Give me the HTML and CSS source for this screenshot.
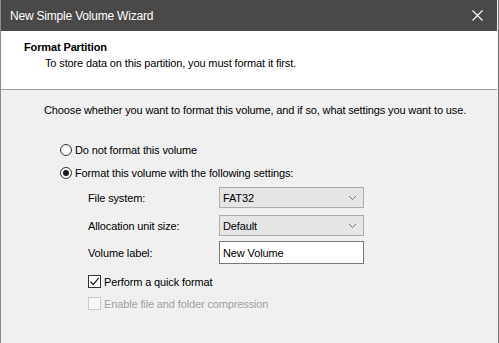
FILE: index.html
```html
<!DOCTYPE html>
<html lang="en">
<head>
    <meta charset="UTF-8">
    <title>New Simple Volume Wizard</title>
    <link rel="stylesheet" href="styles.css">
</head>
<body>

    <div class="window">

        <div class="titlebar">
            <span class="title">New Simple Volume Wizard</span>
            <svg class="close" width="11" height="11" viewBox="0 0 11 11">
                <path d="M0.5 0.5 L10.5 10.5 M10.5 0.5 L0.5 10.5" stroke="#ffffff" stroke-width="1.1" fill="none"/>
            </svg>
        </div>

        <div class="header">
            <div class="page-title">Format Partition</div>
            <div class="page-sub">To store data on this partition, you must format it first.</div>
        </div>

        <div class="content">
            <p class="intro">Choose whether you want to format this volume, and if so, what settings you want to use.</p>

            <label class="option first">
                <span class="radio"></span>
                <span>Do not format this volume</span>
            </label>
            <label class="option second">
                <span class="radio checked"></span>
                <span>Format this volume with the following settings:</span>
            </label>

            <div class="settings">
                <div class="field combo-row">
                    <span class="field-label">File system:</span>
                    <div class="combo">
                        <span>FAT32</span>
                        <svg width="9" height="6" viewBox="0 0 9 6"><path d="M1 1 L4.5 4.5 L8 1" stroke="#777" fill="none"/></svg>
                    </div>
                </div>
                <div class="field combo-row second-combo">
                    <span class="field-label">Allocation unit size:</span>
                    <div class="combo">
                        <span>Default</span>
                        <svg width="9" height="6" viewBox="0 0 9 6"><path d="M1 1 L4.5 4.5 L8 1" stroke="#777" fill="none"/></svg>
                    </div>
                </div>
                <div class="field text-row">
                    <span class="field-label">Volume label:</span>
                    <div class="textbox">New Volume</div>
                </div>

                <label class="check quick">
                    <span class="box">
                        <svg width="11" height="11" viewBox="0 0 11 11"><path d="M1.5 5.5 L4.3 8.5 L9.8 1.8" stroke="#222" stroke-width="1.2" fill="none"/></svg>
                    </span>
                    <span>Perform a quick format</span>
                </label>
                <label class="check compress disabled">
                    <span class="box"></span>
                    <span>Enable file and folder compression</span>
                </label>
            </div>
        </div>

    </div>

</body>
</html>
```

FILE: styles.css
```css
/* --- Base --- */
body {
    margin: 0;
    padding: 0;
    font-family: 'Liberation Sans', Arial, sans-serif;
    font-size: 11px;
    letter-spacing: -0.13px;
    color: #000;
    background-color: #f0f0f0;
    white-space: nowrap;
}

.window {
    width: 499px;
    height: 343px;
    background-color: #f0f0f0;
    border-left: 1px solid #8a8a8a;
    border-right: 1px solid #7a7a7a;
    box-sizing: border-box;
    padding-right: 1px;
    overflow: hidden;
}

/* --- Title bar --- */
.titlebar {
    height: 31px;
    background-color: #4a4948;
    color: #ffffff;
    display: flex;
    align-items: center;
    justify-content: space-between;
    padding: 0 14px 0 9px;
}
.title { font-size: 12px; letter-spacing: -0.2px; }
.close { display: block; }

/* --- Header --- */
.header {
    height: 59px;
    background-color: #ffffff;
    border-bottom: 1px solid #a0a0a0;
    padding: 8px 0 0 23px;
    box-sizing: border-box;
    line-height: 16px;
}
.page-title { font-weight: 700; }
.page-sub { padding-left: 21px; }

/* --- Content --- */
.content { padding: 0 0 0 43px; }
.intro { margin: 12px 0 0; line-height: 16px; }

.option {
    display: flex;
    align-items: center;
    height: 16px;
    margin-left: 16px;
}
.option.first { margin-top: 24px; }
.option.second { margin-top: 7px; }

.radio {
    width: 12px;
    height: 12px;
    border: 1px solid #333;
    border-radius: 50%;
    background-color: #ffffff;
    box-sizing: border-box;
    margin-right: 3px;
    display: flex;
    align-items: center;
    justify-content: center;
}
.radio.checked::after {
    content: "";
    width: 6px;
    height: 6px;
    border-radius: 50%;
    background-color: #1a1a1a;
}

/* --- Settings --- */
.settings { margin-left: 44px; }

.field {
    display: flex;
    align-items: center;
}
.field-label { width: 131px; }
.combo-row { margin-top: 6px; }
.second-combo { margin-top: 7px; }
.text-row { margin-top: 5px; }

.combo {
    width: 145px;
    height: 21px;
    box-sizing: border-box;
    background-color: #e5e5e5;
    border: 1px solid #adadad;
    display: flex;
    align-items: center;
    justify-content: space-between;
    padding: 0 6px 0 3px;
}

.textbox {
    width: 145px;
    height: 23px;
    box-sizing: border-box;
    background-color: #ffffff;
    border: 1px solid #7a7a7a;
    padding: 0 3px;
    display: flex;
    align-items: center;
}

.check {
    display: flex;
    align-items: center;
    height: 13px;
}
.check.quick { margin-top: 11px; }
.check.compress { margin-top: 9px; }

.box {
    width: 13px;
    height: 13px;
    box-sizing: border-box;
    border: 1px solid #333;
    background-color: #ffffff;
    margin-right: 3px;
    display: flex;
    align-items: center;
    justify-content: center;
}
.box svg { display: block; }

.check.disabled { color: #a0a0a0; }
.check.disabled .box { border-color: #cccccc; background-color: #f7f7f7; }
```
